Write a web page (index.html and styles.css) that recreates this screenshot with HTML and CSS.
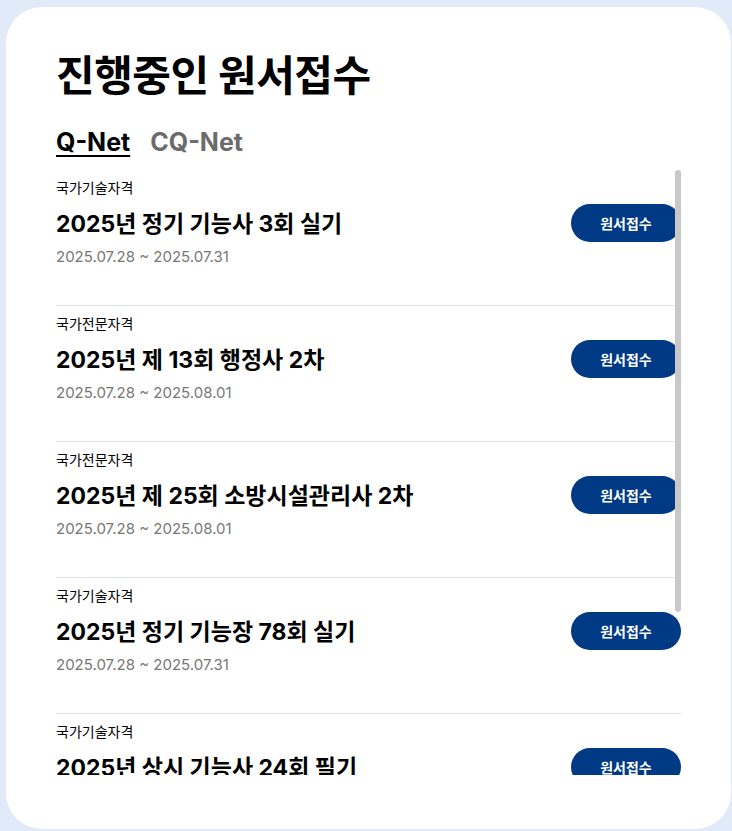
FILE: index.html
```html
<!DOCTYPE html>
<html lang="ko">
<head>
    <meta charset="UTF-8">
    <meta name="viewport" content="width=device-width, initial-scale=1.0">
    <title>진행중인 원서접수</title>
    <link rel="stylesheet" href="styles.css">
</head>
<body>
    <div class="card">
        <h1>진행중인 원서접수</h1>

        <div class="tabs">
            <span class="tab active">Q-Net</span>
            <span class="tab">CQ-Net</span>
        </div>

        <div class="list-wrap">
            <ul class="exam-list">
                <li class="exam-item">
                    <div class="exam-info">
                        <div class="exam-type">국가기술자격</div>
                        <div class="exam-title">2025년 정기 기능사 3회 실기</div>
                        <div class="exam-date">2025.07.28 ~ 2025.07.31</div>
                    </div>
                    <button class="apply-btn">원서접수</button>
                </li>
                <li class="exam-item">
                    <div class="exam-info">
                        <div class="exam-type">국가전문자격</div>
                        <div class="exam-title">2025년 제 13회 행정사 2차</div>
                        <div class="exam-date">2025.07.28 ~ 2025.08.01</div>
                    </div>
                    <button class="apply-btn">원서접수</button>
                </li>
                <li class="exam-item">
                    <div class="exam-info">
                        <div class="exam-type">국가전문자격</div>
                        <div class="exam-title">2025년 제 25회 소방시설관리사 2차</div>
                        <div class="exam-date">2025.07.28 ~ 2025.08.01</div>
                    </div>
                    <button class="apply-btn">원서접수</button>
                </li>
                <li class="exam-item">
                    <div class="exam-info">
                        <div class="exam-type">국가기술자격</div>
                        <div class="exam-title">2025년 정기 기능장 78회 실기</div>
                        <div class="exam-date">2025.07.28 ~ 2025.07.31</div>
                    </div>
                    <button class="apply-btn">원서접수</button>
                </li>
                <li class="exam-item">
                    <div class="exam-info">
                        <div class="exam-type">국가기술자격</div>
                        <div class="exam-title">2025년 상시 기능사 24회 필기</div>
                        <div class="exam-date">2025.07.28 ~ 2025.08.01</div>
                    </div>
                    <button class="apply-btn">원서접수</button>
                </li>
                <li class="exam-item">
                    <div class="exam-info">
                        <div class="exam-type">국가기술자격</div>
                        <div class="exam-title">2025년 상시 기능사 25회 필기</div>
                        <div class="exam-date">2025.08.04 ~ 2025.08.07</div>
                    </div>
                    <button class="apply-btn">원서접수</button>
                </li>
            </ul>
            <!-- 스크롤 막대 -->
            <div class="scroll-thumb"></div>
        </div>
    </div>
</body>
</html>
```

FILE: styles.css
```css
html, body {
    margin: 0;
    height: 100%;
}
body {
    background-color: #e1eaf8;
    font-family: Inter, "Noto Sans CJK KR", sans-serif;
    color: #000;
    padding: 7px 1px 0 6px;
    box-sizing: border-box;
    overflow: hidden;
}
.card {
    background-color: #fff;
    border-radius: 36px;
    height: 822px;
    padding: 40px 50px 0;
    box-sizing: border-box;
}
h1 {
    margin: 0;
    font-size: 42px;
    line-height: 58px;
    font-weight: 700;
    letter-spacing: -0.5px;
}
.tabs {
    display: flex;
    gap: 20px;
    margin-top: 21px;
}
.tab {
    font-size: 25px;
    line-height: 32px;
    font-weight: 700;
    color: #6b6b6b;
}
.tab.active {
    color: #000;
    text-decoration: underline;
    text-decoration-thickness: 2px;
    text-underline-offset: 4px;
}
.list-wrap {
    position: relative;
    margin-top: 12px;
    height: 605px;
    overflow: hidden;
}
.exam-list {
    list-style: none;
    margin: 0;
    padding: 0;
}
.exam-item {
    display: flex;
    align-items: center;
    justify-content: space-between;
    padding: 8px 0 37px;
    border-bottom: 1px solid #dbe3ea;
}
.exam-type {
    font-size: 14px;
    line-height: 20px;
}
.exam-title {
    font-size: 23px;
    line-height: 32px;
    font-weight: 700;
    margin-top: 10px;
}
.exam-date {
    font-size: 15px;
    line-height: 22px;
    color: #777;
    margin-top: 6px;
}
.apply-btn {
    width: 110px;
    height: 38px;
    border: none;
    border-radius: 19px;
    background-color: #003a84;
    color: #fff;
    font-family: inherit;
    font-size: 14px;
    font-weight: 700;
    cursor: pointer;
}
.scroll-thumb {
    position: absolute;
    top: 0;
    right: 0;
    width: 6px;
    height: 442px;
    border-radius: 3px;
    background-color: #c8c8c8;
}
```
